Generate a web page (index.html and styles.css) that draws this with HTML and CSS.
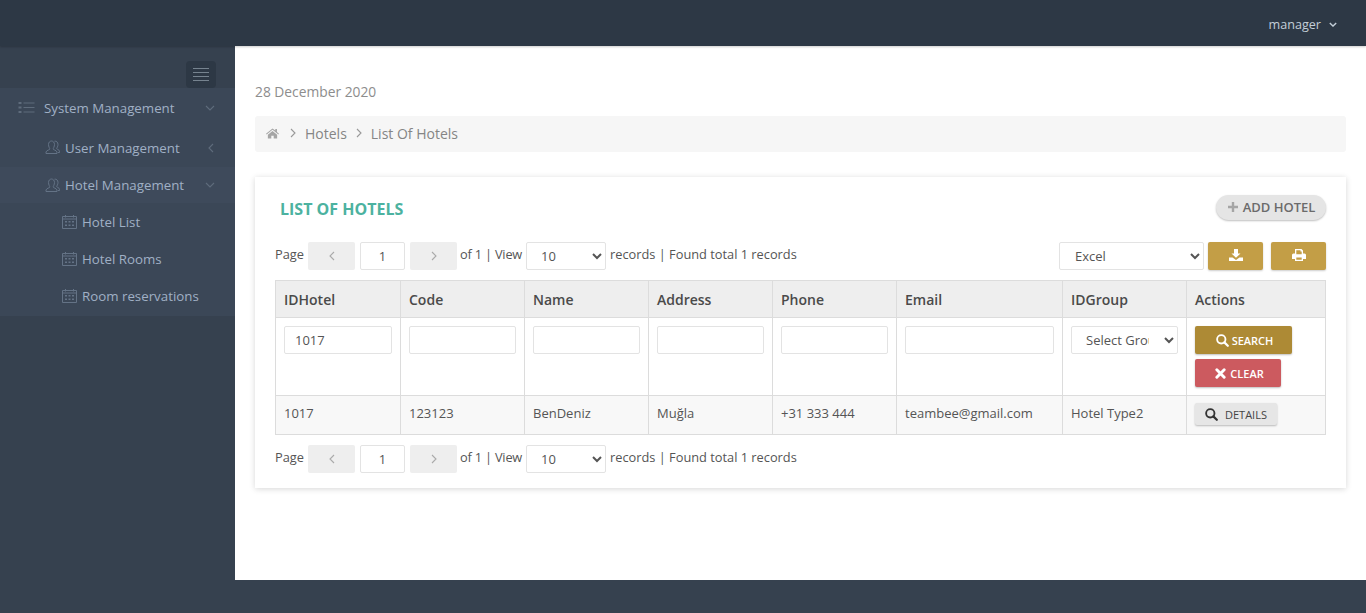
FILE: index.html
```html
<!DOCTYPE html>
<html>
<head>
<meta charset="utf-8">
<title>List Of Hotels</title>
<link rel="stylesheet" href="styles.css">
</head>
<body>
<svg class="defs" width="0" height="0">
    <symbol id="i-caret" viewBox="0 0 10 6"><path d="M1 1l4 4 4-4" fill="none" stroke="currentColor" stroke-width="1.700"/></symbol>
    <symbol id="i-down" viewBox="0 0 10 6"><path d="M1 1l4 4 4-4" fill="none" stroke="currentColor" stroke-width="1.1"/></symbol>
    <symbol id="i-left" viewBox="0 0 6 10"><path d="M5 1L1 5l4 4" fill="none" stroke="currentColor" stroke-width="1.1"/></symbol>
    <symbol id="i-right" viewBox="0 0 6 10"><path d="M1 1l4 4-4 4" fill="none" stroke="currentColor" stroke-width="1.1"/></symbol>
    <symbol id="i-user" viewBox="0 0 15 15"><g fill="none" stroke="currentColor" stroke-width="1"><path d="M3.500 4.500C3.500 2.500 4.800 1 6.500 1s3 1.500 3 3.500S8.300 8.500 8 9c0 .8 3.500 1.200 4 3v1.500H1V12c.5-1.800 4-2.200 4-3-.3-.5-1.500-2.500-1.500-4.500z"/><path d="M9.500 1.200c1.900-.4 3.500 1 3.500 3.300 0 1.800-1 3.300-1.400 4 .2.700 2.500 1 2.900 2.700v1.300h-1.600"/></g></symbol>
    <symbol id="i-cal" viewBox="0 0 15 15"><g fill="none" stroke="currentColor"><path d="M.5 2.500h14v12H.5zM.5 5h14"/><path d="M3.500 1v2.500M11.500 1v2.500"/></g><path fill="currentColor" d="M3 7h2v1.500H3zM6.500 7h2v1.500h-2zM10 7h2v1.500h-2zM3 10.500h2V12H3zM6.500 10.500h2V12h-2zM10 10.500h2V12h-2z"/></symbol>
    <symbol id="i-search" viewBox="0 0 14 14"><circle cx="5.700" cy="5.700" r="4.500" fill="none" stroke="currentColor" stroke-width="2"/><path d="M9 9l3.700 3.700" stroke="currentColor" stroke-width="2.400" stroke-linecap="round"/></symbol>
    <symbol id="i-times" viewBox="0 0 12 12"><path d="M2 2l8 8M10 2l-8 8" stroke="currentColor" stroke-width="3.200" stroke-linecap="round"/></symbol>
</svg>

<header class="topbar">
    <span class="user-name">manager</span>
    <svg class="user-caret"><use href="#i-caret"/></svg>
</header>

<div class="layout">
    <aside class="sidebar">
        <div class="toggle-row">
            <button class="toggle"><span></span><span></span><span></span><span></span></button>
        </div>
        <nav class="menu">
            <a class="menu-item top">
                <svg class="list-icon" viewBox="0 0 16 11" fill="currentColor"><path d="M0 0h3v2H0zM5 .5h11v1H5zM0 4.500h3v2H0zM5 5h11v1H5zM0 9h3v2H0zM5 9.500h11v1H5z"/></svg>
                <span class="menu-text">System Management</span>
                <svg class="menu-caret"><use href="#i-down"/></svg>
            </a>
            <a class="menu-item sub">
                <svg class="menu-icon"><use href="#i-user"/></svg>
                <span class="menu-text">User Management</span>
                <svg class="menu-caret closed"><use href="#i-left"/></svg>
            </a>
            <a class="menu-item sub open">
                <svg class="menu-icon"><use href="#i-user"/></svg>
                <span class="menu-text">Hotel Management</span>
                <svg class="menu-caret"><use href="#i-down"/></svg>
            </a>
            <a class="menu-item leaf"><svg class="menu-icon"><use href="#i-cal"/></svg><span class="menu-text">Hotel List</span></a>
            <a class="menu-item leaf"><svg class="menu-icon"><use href="#i-cal"/></svg><span class="menu-text">Hotel Rooms</span></a>
            <a class="menu-item leaf"><svg class="menu-icon"><use href="#i-cal"/></svg><span class="menu-text">Room reservations</span></a>
        </nav>
    </aside>

    <main class="content">
        <div class="date">28 December 2020</div>
        <div class="breadcrumb">
            <svg class="home" viewBox="0 0 14 11" fill="currentColor"><path d="M7 0L0 5.800l.7.800L7 1.500l6.300 5.100.7-.8-2.200-1.900V.7h-1.800v1.700zM2 6.800V11h3.700V7.800h2.600V11H12V6.800L7 2.700z"/></svg>
            <svg class="crumb-sep first"><use href="#i-right"/></svg>
            <span>Hotels</span>
            <svg class="crumb-sep"><use href="#i-right"/></svg>
            <span>List Of Hotels</span>
        </div>

        <section class="card">
            <div class="card-head">
                <h2>LIST OF HOTELS</h2>
                <button class="btn-add"><svg viewBox="0 0 10 10" fill="currentColor"><path d="M3.800 0h2.400v3.800H10v2.400H6.200V10H3.800V6.200H0V3.800h3.800z"/></svg>ADD HOTEL</button>
            </div>

            <div class="toolbar">
                <div class="pager">
                    <span class="page-label">Page</span>
                    <button class="page-btn"><svg><use href="#i-left"/></svg></button>
                    <input class="page-input" value="1">
                    <button class="page-btn"><svg><use href="#i-right"/></svg></button>
                    <span class="page-of">of 1 | View</span>
                    <select class="page-size"><option>10</option></select>
                    <span>records | Found total 1 records</span>
                </div>
                <div class="export">
                    <select class="export-type"><option>Excel</option></select>
                    <button class="btn-gold">
                        <svg viewBox="0 0 14 12" fill="currentColor"><path d="M5 0h4v4.500h2.500L7 8.800 2.500 4.500H5zM0 8.500h3.500L7 11l3.500-2.500H14V12H0z"/></svg>
                    </button>
                    <button class="btn-gold">
                        <svg viewBox="0 0 14 12" fill="currentColor"><path fill-rule="evenodd" d="M3 0h6.500L11 1.500V4.500h1.500A1.500 1.500 0 0 1 14 6v4h-3v2H3v-2H0V6a1.500 1.500 0 0 1 1.500-1.500H3zM4.300 1.200v4h5.400V2.500H8.500V1.200zM4.300 8.500v2.300h5.400V8.500z"/></svg>
                    </button>
                </div>
            </div>

            <table class="grid">
                <colgroup>
                    <col class="c-id"><col class="c-std"><col class="c-std"><col class="c-std"><col class="c-std"><col class="c-email"><col class="c-std"><col class="c-act">
                </colgroup>
                <thead>
                    <tr>
                        <th>IDHotel</th><th>Code</th><th>Name</th><th>Address</th><th>Phone</th><th>Email</th><th>IDGroup</th><th>Actions</th>
                    </tr>
                </thead>
                <tbody>
                    <tr class="filters">
                        <td><input class="field" value="1017"></td>
                        <td><input class="field"></td>
                        <td><input class="field"></td>
                        <td><input class="field"></td>
                        <td><input class="field"></td>
                        <td><input class="field"></td>
                        <td><select class="field group"><option>Select Group</option></select></td>
                        <td>
                            <button class="btn-search"><svg><use href="#i-search"/></svg>SEARCH</button>
                            <button class="btn-clear"><svg><use href="#i-times"/></svg>CLEAR</button>
                        </td>
                    </tr>
                    <tr class="data">
                        <td>1017</td><td>123123</td><td>BenDeniz</td><td>Muğla</td><td>+31 333 444</td><td>teambee@gmail.com</td><td>Hotel Type2</td>
                        <td><button class="btn-details"><svg><use href="#i-search"/></svg>DETAILS</button></td>
                    </tr>
                </tbody>
            </table>

            <div class="pager bottom">
                <span class="page-label">Page</span>
                <button class="page-btn"><svg><use href="#i-left"/></svg></button>
                <input class="page-input" value="1">
                <button class="page-btn"><svg><use href="#i-right"/></svg></button>
                <span class="page-of">of 1 | View</span>
                <select class="page-size"><option>10</option></select>
                <span>records | Found total 1 records</span>
            </div>
        </section>
    </main>
</div>

<footer class="footer"></footer>
</body>
</html>
```

FILE: styles.css
```css
* {
    box-sizing: border-box;
}

html, body {
    height: 100%;
}

body {
    margin: 0;
    background: #36414f;
    color: #555;
    font-family: "Open Sans", sans-serif;
    font-size: 13px;
    display: flex;
    flex-direction: column;
    overflow: hidden;
}

button, input, select {
    font-family: inherit;
}

.defs {
    position: absolute;
}

.topbar {
    height: 46px;
    flex: none;
    background: #2d3845;
    color: #c3ced8;
    display: flex;
    align-items: center;
    justify-content: flex-end;
    padding: 2px 29px 0 0;
    font-size: 12.600px;
    box-shadow: 0 1px 2px rgba(0, 0, 0, .2);
    position: relative;
    z-index: 2;
}

.user-name {
    margin-right: 8px;
}

.user-caret {
    width: 8px;
    height: 5px;
}

.layout {
    height: 534px;
    flex: none;
    display: flex;
}

.footer {
    flex: 1;
}

/* sidebar */
.sidebar {
    width: 235px;
    flex: none;
    background: #36414f;
    font-size: 13.300px;
}

.toggle-row {
    height: 42px;
    display: flex;
    justify-content: flex-end;
    padding: 15px 19px 0 0;
}

.toggle {
    width: 30px;
    height: 27px;
    padding: 7px 7px 0;
    border: 0;
    border-radius: 4px;
    background: #2d3845;
    display: flex;
    flex-direction: column;
    gap: 3px;
    align-items: stretch;
}

.toggle span {
    height: 1px;
    background: #76838f;
}

.menu {
    background: #3b4757;
    height: 228px;
}

.menu-item {
    height: 37px;
    display: flex;
    align-items: center;
    padding-left: 18px;
    position: relative;
}

.menu-item.top {
    height: 40px;
    padding-bottom: 1px;
}

.menu-item.sub {
    height: 39px;
    padding-left: 45px;
}

.menu-item.open {
    height: 36px;
    background: #3e4a5b;
}

.menu-item.leaf {
    padding-left: 62px;
}

.menu-text {
    color: #a0b0c5;
}

.list-icon {
    width: 17px;
    height: 11px;
    margin-right: 9px;
    color: #5f6c7c;
}

.menu-icon {
    width: 15px;
    height: 15px;
    margin-right: 5px;
    color: #647386;
}

.menu-caret {
    width: 10px;
    height: 6px;
    position: absolute;
    right: 20px;
    top: 50%;
    margin-top: -3px;
    color: #5f6c7c;
}

.menu-caret.closed {
    width: 6px;
    height: 10px;
    margin-top: -5px;
    right: 21px;
}

/* content */
.content {
    flex: 1;
    background: #fff;
    padding: 36px 20px 0;
}

.date {
    color: #8d8d8d;
    font-size: 13.800px;
    line-height: 19px;
    margin-bottom: 15px;
}

.breadcrumb {
    height: 36px;
    background: #f6f6f6;
    border-radius: 3px;
    display: flex;
    align-items: center;
    padding: 0 0 2px 11px;
    color: #858585;
    font-size: 14px;
    margin-bottom: 25px;
}

.home {
    width: 13px;
    height: 11px;
    color: #a5a5a5;
}

.crumb-sep {
    width: 6px;
    height: 10px;
    margin: 0 9px 0 9px;
    color: #999;
}

.crumb-sep.first {
    margin-left: 11px;
}

.card {
    width: 1091px;
    height: 311px;
    background: #fff;
    padding: 18px 20px 0;
    box-shadow: 0 1px 6px rgba(0, 0, 0, .16);
}

.card-head {
    height: 25px;
    display: flex;
    align-items: center;
    justify-content: space-between;
    padding-left: 5px;
    margin-bottom: 22px;
}

.card-head h2 {
    margin: 0;
    color: #4cb2a0;
    font-size: 16px;
    font-weight: 700;
    position: relative;
    top: 1px;
}

.btn-add {
    height: 25px;
    width: 110px;
    border: 0;
    border-radius: 13px;
    background: #e5e5e5;
    color: #6b6b6b;
    font-size: 13px;
    font-weight: 600;
    display: flex;
    align-items: center;
    justify-content: center;
    gap: 5px;
    box-shadow: 0 1px 2px rgba(0, 0, 0, .25);
    padding: 0 0 2px 1px;
}

.btn-add svg {
    width: 10px;
    height: 10px;
    color: #a5a5a5;
}

.toolbar {
    display: flex;
    justify-content: space-between;
    margin-bottom: 10px;
}

.pager {
    height: 28px;
    display: flex;
    align-items: flex-start;
    line-height: 24px;
    color: #555;
    font-size: 12.800px;
}

.pager.bottom {
    margin-top: 10px;
}

.page-label {
    width: 30px;
}

.page-of {
    width: 63px;
    white-space: nowrap;
    letter-spacing: -.2px;
}

.page-btn {
    width: 47px;
    height: 28px;
    margin: 0 3px 0 3px;
    border: 0;
    border-radius: 2px;
    background: #eee;
    color: #aaa;
    padding: 0;
    display: flex;
    align-items: center;
    justify-content: center;
}

.page-btn svg {
    width: 6px;
    height: 10px;
}

.page-input {
    width: 45px;
    height: 28px;
    margin: 0 2px;
    border: 1px solid #e3e3e3;
    border-radius: 2px;
    text-align: center;
    font-size: 13px;
    color: #555;
    padding: 0;
}

.page-size {
    width: 80px;
    height: 28px;
    margin: 0 4px 0 3px;
    border: 1px solid #e3e3e3;
    border-radius: 2px;
    background: #fff;
    font-size: 13px;
    color: #555;
    padding: 0 0 0 10px;
}

.export {
    display: flex;
    gap: 8px;
}

.export-type {
    width: 145px;
    height: 28px;
    margin-right: -4px;
    border: 1px solid #e3e3e3;
    border-radius: 2px;
    background: #fff;
    font-size: 13px;
    color: #555;
    padding: 0 0 0 11px;
}

.btn-gold {
    width: 55px;
    height: 28px;
    border: 0;
    border-radius: 2px;
    background: #c39e46;
    color: #fff;
    padding: 0;
    box-shadow: 0 1px 2px rgba(0, 0, 0, .2);
}

.btn-gold svg {
    width: 14px;
    height: 12px;
    display: block;
    margin: 0 auto 3px;
}

/* table */
.grid {
    width: 1050px;
    table-layout: fixed;
    border-collapse: collapse;
    border: 1px solid #dcdcdc;
}

.c-id { width: 125px; }
.c-std { width: 124px; }
.c-email { width: 166px; }
.c-act { width: 139px; }

.grid th, .grid td {
    border: 1px solid #dcdcdc;
    padding: 0 8px;
    text-align: left;
}

.grid th {
    height: 37px;
    background: #eee;
    color: #4a4a4a;
    font-size: 14px;
    font-weight: 600;
}

.filters td {
    height: 78px;
    vertical-align: top;
    padding-top: 8px;
}

.field {
    display: block;
    width: 100%;
    height: 28px;
    border: 1px solid #e3e3e3;
    border-radius: 2px;
    background: #fff;
    font-size: 13px;
    color: #555;
    padding: 0 0 0 10px;
}

.group {
    width: 107px;
    padding: 0 12px 0 10px;
}

.data td {
    height: 39px;
    background: #f8f8f8;
    color: #555;
    padding-bottom: 5px;
}

.btn-search, .btn-clear, .btn-details {
    display: flex;
    align-items: center;
    justify-content: center;
    border: 0;
    border-radius: 2px;
    font-size: 11px;
    font-weight: 600;
    padding: 0;
    box-shadow: 0 1px 2px rgba(0, 0, 0, .25);
}

.btn-search, .btn-clear {
    color: #fff;
    height: 28px;
}

.btn-search {
    width: 97px;
    background: #ad8a35;
    margin-bottom: 5px;
    padding-left: 2px;
}

.btn-search svg {
    width: 13px;
    height: 13px;
    margin-right: 3px;
}

.btn-clear {
    width: 86px;
    background: #cc5a5f;
    padding-left: 3px;
}

.btn-clear svg {
    width: 11px;
    height: 11px;
    margin-right: 4px;
}

.btn-details {
    width: 82px;
    height: 22px;
    margin: 3px 0 0;
    background: #e6e6e6;
    color: #444;
    font-weight: 500;
}

.btn-details svg {
    width: 13px;
    height: 13px;
    margin-right: 7px;
    color: #333;
}
```
